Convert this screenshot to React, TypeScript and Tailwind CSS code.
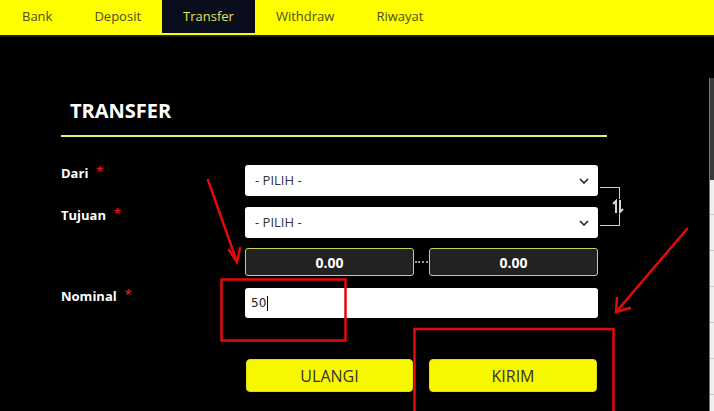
import React from "react"

const tabs = ["Bank", "Deposit", "Transfer", "Withdraw", "Riwayat"]

function Chevron() {
  return (
    <svg width="10" height="6" viewBox="0 0 10 6" className="shrink-0">
      <path d="M1 1l4 4 4-4" fill="none" stroke="#222" strokeWidth="1.6" />
    </svg>
  )
}

function Select() {
  return (
    <div className="flex h-[31px] items-center justify-between rounded-[3px] bg-white pl-[10px] pr-[9px] text-[13px] text-[#333]">
      <span>- PILIH -</span>
      <Chevron />
    </div>
  )
}

function Label({ text }: { text: string }) {
  return (
    <div className="flex items-start pt-[1px] text-[13px] font-bold leading-[14px] text-white">
      {text}
      <span className="ml-[8px] -mt-[2px] text-[#e01010]">*</span>
    </div>
  )
}

function Balance() {
  return (
    <div className="flex h-[28px] w-[169px] items-center justify-center rounded-[3px] border border-[#c9d05c] bg-[#222222] text-[14px] font-bold text-white">
      0.00
    </div>
  )
}

function Annotations() {
  return (
    <svg
      className="pointer-events-none absolute left-0 top-0"
      width="714"
      height="411"
      viewBox="0 0 714 411"
    >
      <g fill="none" stroke="#e50a0a" strokeWidth="2.5" strokeLinecap="round">
        <path d="M208 180L237 262" />
        <path d="M229 250L237 262L240 248" />
        <rect x="221.5" y="279.5" width="124" height="61" strokeLinecap="butt" />
        <rect x="414.5" y="329" width="199" height="90" strokeLinecap="butt" />
        <path d="M687 229L616 312" />
        <path d="M617 298L616 312L630 308" />
      </g>
    </svg>
  )
}

export default function App() {
  return (
    <div className="relative h-[411px] w-[714px] overflow-hidden bg-black font-['Open_Sans',sans-serif]">
      {/* Tabs */}
      <div className="flex h-[37px] border-b-2 border-[#1a1a1a] bg-[#ffff00] pl-[1px]">
        {tabs.map((t) => (
          <div
            key={t}
            className={
              t === "Transfer"
                ? "flex h-[33px] items-center bg-[#0a0e1c] px-[21px] text-[13px] text-[#e3e55a]"
                : "flex h-[33px] items-center px-[21px] text-[13px] text-[#4e4e20]"
            }
          >
            {t}
          </div>
        ))}
      </div>

      <div className="flex">
        <div className="flex-1 pl-[61px]">
          {/* Title */}
          <div className="mt-[62px] w-[546px] border-b-2 border-[#e8eb7c] pb-[12px] pl-[9px] text-[20px] font-bold leading-[24px] text-white">
            TRANSFER
          </div>

          {/* Form */}
          <div className="relative mt-[28px] w-[537px]">
            <div className="grid grid-cols-[184px_353px] gap-y-[11px]">
              <Label text="Dari" />
              <Select />
              <Label text="Tujuan" />
              <Select />
            </div>

            {/* swap bracket */}
            <div className="absolute left-[539px] top-[22px] h-[39px] w-[20px] border-y border-r border-[#cfcfcf]" />
            <svg
              className="absolute left-[550px] top-[34px] bg-black"
              width="14"
              height="15"
              viewBox="0 0 14 15"
            >
              <g fill="none" stroke="#d6d6d6" strokeWidth="2">
                <path d="M5 14V2L2 5" />
                <path d="M9 1v12l3-3" />
              </g>
            </svg>

            <div className="mt-[10px] grid grid-cols-[184px_353px]">
              <div />
              <div className="flex items-center">
                <Balance />
                <div className="mx-[1px] h-0 flex-1 border-t-2 border-dotted border-[#9a9a9a]" />
                <Balance />
              </div>
            </div>

            <div className="mt-[12px] grid grid-cols-[184px_353px]">
              <Label text="Nominal" />
              <div className="flex h-[30px] items-center rounded-[3px] bg-white pl-[6px] font-['DejaVu_Sans',sans-serif] text-[12px] text-[#222]">
                50
                <span className="ml-[1px] h-[15px] w-[1px] bg-black" />
              </div>
            </div>

            <div className="mt-[41px] grid grid-cols-[184px_353px]">
              <div />
              <div className="flex gap-[16px] pl-[1px]">
                <button className="h-[33px] w-[167px] rounded-[4px] border border-[#e2e200] bg-[#f7f700] text-[16px] text-[#333]">
                  ULANGI
                </button>
                <button className="h-[33px] w-[168px] rounded-[4px] border border-[#e2e200] bg-[#f7f700] text-[16px] text-[#333]">
                  KIRIM
                </button>
              </div>
            </div>
          </div>
        </div>

        {/* neighbouring panel edge */}
        <div className="mt-[41px] flex w-[5px] flex-col border-l border-[#777]">
          <div className="h-[102px] bg-[#3a3a3a]" />
          <div className="h-[35px] border-b border-[#c8c8c8] bg-[#efefef]" />
          <div className="h-[36px] border-b border-[#c8c8c8] bg-[#efefef]" />
          <div className="h-[36px] border-b border-[#c8c8c8] bg-[#efefef]" />
          <div className="h-[36px] border-b border-[#c8c8c8] bg-[#efefef]" />
          <div className="h-[36px] border-b border-[#c8c8c8] bg-[#efefef]" />
          <div className="h-[36px] border-b border-[#c8c8c8] bg-[#efefef]" />
          <div className="h-[40px] bg-[#efefef]" />
        </div>
      </div>

      <Annotations />
    </div>
  )
}
